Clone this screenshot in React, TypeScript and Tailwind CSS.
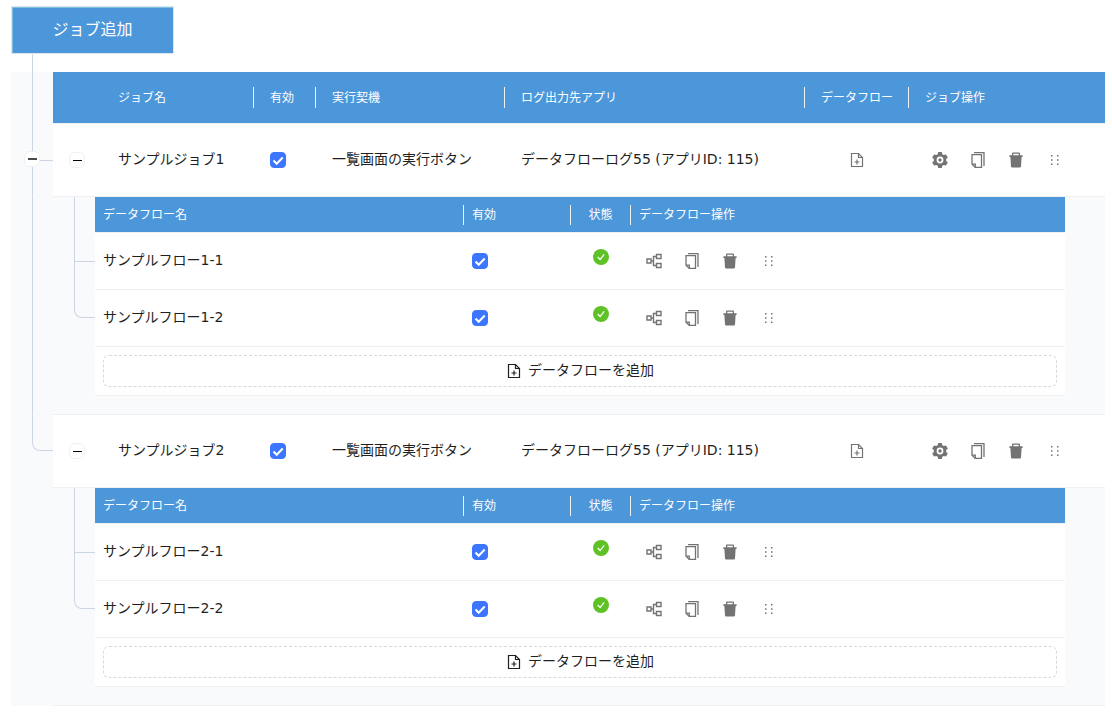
import type { ReactNode } from 'react';

interface Flow {
    id: number;
    name: string;
}

interface Job {
    id: number;
    name: string;
    trigger: string;
    logApp: string;
    flows: Flow[];
}

const jobs: Job[] = [
    {
        id: 1,
        name: 'サンプルジョブ1',
        trigger: '一覧画面の実行ボタン',
        logApp: 'データフローログ55 (アプリID: 115)',
        flows: [
            { id: 11, name: 'サンプルフロー1-1' },
            { id: 12, name: 'サンプルフロー1-2' },
        ],
    },
    {
        id: 2,
        name: 'サンプルジョブ2',
        trigger: '一覧画面の実行ボタン',
        logApp: 'データフローログ55 (アプリID: 115)',
        flows: [
            { id: 21, name: 'サンプルフロー2-1' },
            { id: 22, name: 'サンプルフロー2-2' },
        ],
    },
];

const FileAddIcon = () => (
    <svg className="size-4" viewBox="0 0 16 16" fill="none" stroke="currentColor" strokeWidth="1.2" aria-hidden="true">
        <path d="M2.5 1.5h7l4 4v9h-11z" />
        <path d="M9.5 1.5v4h4M8 7.5v5M5.5 10h5" />
    </svg>
);

const GearIcon = () => (
    <svg className="size-4" viewBox="0 0 16 16" fill="currentColor" fillRule="evenodd" aria-hidden="true">
        <path d="M6.2 0h3.6l.5 2.2 1.5.9 2.2-.7 1.8 3.1L14.2 7v2l1.6 1.5-1.8 3.1-2.2-.7-1.5.9-.5 2.2H6.2l-.5-2.2-1.5-.9-2.200.7L.2 10.500 1.8 9V7L.2 5.500 2 2.400l2.2.7 1.5-.9zM8 4.600a3.400 3.400 0 1 0 0 6.800 3.400 3.400 0 0 0 0-6.800zM8 6.300a1.700 1.700 0 1 1 0 3.400 1.700 1.700 0 0 1 0-3.400z" />
    </svg>
);

const CopyIcon = () => (
    <svg className="size-4" viewBox="0 0 16 16" fill="none" stroke="currentColor" strokeWidth="1.3" aria-hidden="true">
        <path d="M4 .6h10v13.400" />
        <path d="M2 2.600h9.500v12.800H5.300L2 12.200z" />
        <path d="M2 12.200h3.300v3.200" />
    </svg>
);

const TrashIcon = () => (
    <svg className="size-4" viewBox="0 0 16 16" fill="currentColor" aria-hidden="true">
        <path d="M2.400 5h11.200l-.6 9.500a1.200 1.200 0 0 1-1.200 1.100H4.200A1.200 1.200 0 0 1 3 14.500z" />
        <path d="M1.400 3.200H4V1.600C4 .9 4.500.5 5.100.5h5.800c.6 0 1.100.4 1.100 1.100v1.600h2.600V5H1.400zM5.300 3.200h5.400V1.700H5.300z" fillRule="evenodd" />
    </svg>
);

const FlowIcon = () => (
    <svg className="size-4" viewBox="0 0 16 16" fill="none" stroke="currentColor" strokeWidth="1.4" aria-hidden="true">
        <path d="M1 6h4v4H1zM10.500 1.500h4.500v4h-4.500zM10.500 10.500h4.500v4h-4.500zM10.500 3.500h-3v9h3M5 8h2.500" />
    </svg>
);

const DragIcon = () => (
    <svg className="size-4" viewBox="0 0 16 16" fill="currentColor" aria-hidden="true">
        <path d="M5 3h1.500v1.500H5zM11 3h1.500v1.500H11zM5 7.300h1.500v1.500H5zM11 7.300h1.500v1.500H11zM5 11.600h1.500v1.500H5zM11 11.600h1.500v1.500H11z" />
    </svg>
);

const IconButton = ({ label, children }: { label: string; children: ReactNode }) => (
    <button type="button" aria-label={label} className="flex h-8 w-[30px] items-center justify-center text-[#737373]">
        {children}
    </button>
);

const Toggle = ({ bold = false }: { bold?: boolean }) => (
    <button
        type="button"
        aria-label="折りたたむ"
        className="flex size-4 items-center justify-center rounded-md border border-[#f0f0f0] bg-white"
    >
        <svg className="size-3" viewBox="0 0 12 12" aria-hidden="true">
            {bold ? <path d="M2 6h9" stroke="#4a4a4a" strokeWidth="2" /> : <path d="M2 6.500h9" stroke="black" />}
        </svg>
    </button>
);

const Checkbox = ({ label }: { label: string }) => (
    <span className="grid size-4">
        <input
            type="checkbox"
            defaultChecked
            aria-label={label}
            className="peer col-start-1 row-start-1 size-4 appearance-none rounded border border-gray-300 bg-white checked:border-[#3c76ff] checked:bg-[#3c76ff]"
        />
        <svg
            className="pointer-events-none invisible col-start-1 row-start-1 size-4 peer-checked:visible"
            viewBox="0 0 16 16"
            fill="none"
            stroke="white"
            strokeWidth="2"
            aria-hidden="true"
        >
            <path d="M3.500 8.500l3.200 3.200 6-6.200" />
        </svg>
    </span>
);

const StatusIcon = () => (
    <svg className="mx-auto block size-4" viewBox="0 0 16 16" role="img" aria-label="正常">
        <circle cx="8" cy="8" r="8" fill="#5ec226" />
        <path d="M4.700 8l2.400 2.500 4.100-5.200" fill="none" stroke="white" strokeWidth="1.200" />
    </svg>
);

// header label with the thin divider on its right edge
const JobHead = ({ children }: { children: ReactNode }) => (
    <th className="border-b border-[#f0f0f0] bg-[#4c96da] p-0 pl-4 text-left font-normal">
        <div className="flex items-center justify-between">
            {children}
            <span className="h-[21px] w-px bg-[#f0f0f0]" />
        </div>
    </th>
);

const FlowTable = ({ flows }: { flows: Flow[] }) => (
    <table className="w-full table-fixed border-separate border-spacing-0 bg-white">
        <colgroup>
            <col className="w-[369px]" />
            <col className="w-[107px]" />
            <col className="w-[60px]" />
            <col />
        </colgroup>
        <thead className="text-xs text-white">
            <tr className="h-9 *:border-b *:border-[#f0f0f0] *:bg-[#4c96da] *:p-0 *:text-left *:font-normal">
                <th>
                    <div className="flex items-center justify-between pl-2">
                        データフロー名
                        <span className="h-5 w-px bg-[#f0f0f0]" />
                    </div>
                </th>
                <th>
                    <div className="flex items-center justify-between pl-2">
                        有効
                        <span className="h-5 w-px bg-[#f0f0f0]" />
                    </div>
                </th>
                <th>
                    <div className="flex items-center">
                        <span className="grow text-center">状態</span>
                        <span className="h-5 w-px bg-[#f0f0f0]" />
                    </div>
                </th>
                <th>
                    <div className="pl-2">データフロー操作</div>
                </th>
            </tr>
        </thead>
        <tbody>
            {flows.map((flow) => (
                <tr key={flow.id} className="h-[57px] *:border-b *:border-[#f0f0f0] *:px-2 *:py-0">
                    <td>
                        <div className="pb-0.5">{flow.name}</div>
                    </td>
                    <td>
                        <Checkbox label={flow.name} />
                    </td>
                    <td>
                        <div className="pb-2">
                            <StatusIcon />
                        </div>
                    </td>
                    <td>
                        <div className="flex gap-2">
                            <IconButton label="フローを編集"><FlowIcon /></IconButton>
                            <IconButton label="複製"><CopyIcon /></IconButton>
                            <IconButton label="削除"><TrashIcon /></IconButton>
                            <IconButton label="並べ替え"><DragIcon /></IconButton>
                        </div>
                    </td>
                </tr>
            ))}
            <tr>
                <td colSpan={4} className="border-b border-[#f0f0f0] p-2">
                    <button
                        type="button"
                        className="flex h-8 w-full items-center justify-center gap-1.5 rounded-md border border-dashed border-[#d9d9d9]"
                    >
                        <FileAddIcon />
                        <span className="pb-0.5">データフローを追加</span>
                    </button>
                </td>
            </tr>
        </tbody>
    </table>
);

const JobRows = ({ job, first, last }: { job: Job; first: boolean; last: boolean }) => (
    <>
        <tr className="h-[73px] *:border-b *:border-[#f0f0f0] *:bg-white *:py-0">
            <td className="border-[#f9fafc]! bg-transparent! p-0" />
            <td className={last ? 'border-[#f9fafc]! bg-transparent! p-0 align-top' : 'relative border-l border-[#ccd5e4]! border-b-[#f9fafc]! bg-transparent! p-0 align-top'}>
                {last ? (
                    <div className="h-9 rounded-bl-lg border-b border-l border-[#ccd5e4]" />
                ) : (
                    <div className="h-[37px] border-b border-[#ccd5e4]" />
                )}
                {first && (
                    <div className="absolute top-[27px] -left-[9px]">
                        <Toggle bold />
                    </div>
                )}
            </td>
            <td className="px-4">
                <Toggle />
            </td>
            <td className="px-4">
                <div className="pb-0.5">{job.name}</div>
            </td>
            <td className="px-4">
                <Checkbox label={job.name} />
            </td>
            <td className="px-4">
                <div className="pb-0.5">{job.trigger}</div>
            </td>
            <td className="px-4">
                <div className="pb-0.5">{job.logApp}</div>
            </td>
            <td className="px-4">
                <div className="flex justify-center">
                    <IconButton label="データフローを追加"><FileAddIcon /></IconButton>
                </div>
            </td>
            <td className="px-4">
                <div className="flex gap-2">
                    <IconButton label="設定"><GearIcon /></IconButton>
                    <IconButton label="複製"><CopyIcon /></IconButton>
                    <IconButton label="削除"><TrashIcon /></IconButton>
                    <IconButton label="並べ替え"><DragIcon /></IconButton>
                </div>
            </td>
        </tr>
        <tr>
            <td className="p-0" />
            <td className={last ? 'p-0' : 'border-b border-l border-[#ccd5e4] border-b-[#f9fafc] p-0'} />
            <td colSpan={7} className="border-b border-[#f0f0f0] p-0">
                <div className="flex pr-10 pb-[18px]">
                    {/* branch lines to each flow */}
                    <div className="w-[42px] shrink-0 pl-[21px]">
                        {job.flows.map((flow, i) => (
                            <div
                                key={flow.id}
                                className={
                                    i === 0
                                        ? 'h-[65px] border-b border-l border-[#ccd5e4]'
                                        : 'h-14 rounded-bl-lg border-b border-l border-[#ccd5e4]'
                                }
                            />
                        ))}
                    </div>
                    <FlowTable flows={job.flows} />
                </div>
            </td>
        </tr>
    </>
);

const App = () => {
    return (
        <main className="pt-1.5 pr-[7px] pb-3 pl-[11px] font-['DejaVu_Sans','Noto_Sans_CJK_JP',sans-serif] text-sm text-[#1f1f1f]">
            <button
                type="button"
                className="block h-12 w-[163px] border border-[#dde6ee] bg-[#4c96da] text-base text-white shadow-[inset_1px_1px_0_#7fbfdf]"
            >
                ジョブ追加
            </button>
            <div className="ml-[21px] h-[18px] border-l border-[#ccd5e4]" />
            <table className="w-full table-fixed border-separate border-spacing-0 bg-[#f9fafc]">
                <colgroup>
                    <col className="w-[21px]" />
                    <col className="w-[21px]" />
                    <col className="w-[49px]" />
                    <col className="w-[152px]" />
                    <col className="w-[62px]" />
                    <col className="w-[189px]" />
                    <col />
                    <col className="w-[104px]" />
                    <col className="w-[196px]" />
                </colgroup>
                <thead className="text-xs text-white">
                    <tr className="h-[52px]">
                        <td className="p-0" />
                        <td className="border-l border-[#ccd5e4] p-0" />
                        <td className="border-b border-[#f0f0f0] bg-[#4c96da] p-0" />
                        <JobHead>ジョブ名</JobHead>
                        <JobHead>有効</JobHead>
                        <JobHead>実行契機</JobHead>
                        <JobHead>ログ出力先アプリ</JobHead>
                        <JobHead>データフロー</JobHead>
                        <th className="border-b border-[#f0f0f0] bg-[#4c96da] p-0 pl-4 text-left font-normal">
                            ジョブ操作
                        </th>
                    </tr>
                </thead>
                <tbody>
                    {jobs.map((job, i) => (
                        <JobRows key={job.id} job={job} first={i === 0} last={i === jobs.length - 1} />
                    ))}
                </tbody>
            </table>
        </main>
    );
};

export default App;
